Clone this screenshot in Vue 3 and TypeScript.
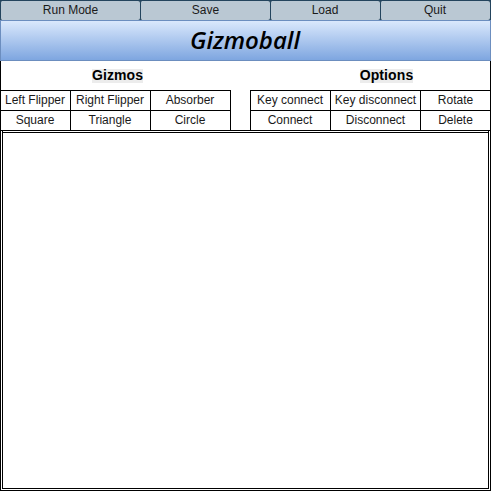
<script setup lang="ts">
interface MenuItem {
  label: string
  size: string
}

const menu: MenuItem[] = [
  { label: 'Run Mode', size: 'w140' },
  { label: 'Save', size: 'w130' },
  { label: 'Load', size: 'w110' },
  { label: 'Quit', size: 'w110' },
]

const gizmos: string[] = ['Left Flipper', 'Right Flipper', 'Absorber', 'Square', 'Triangle', 'Circle']
const options: string[] = ['Key connect', 'Key disconnect', 'Rotate', 'Connect', 'Disconnect', 'Delete']
</script>

<template>
  <div class="window">
    <nav class="menu">
      <button v-for="item in menu" :key="item.label" class="menu-item" :class="item.size">{{ item.label }}</button>
    </nav>
    <header class="banner"><h1>Gizmoball</h1></header>
    <div class="tools">
      <section class="group gizmos">
        <h2><span>Gizmos</span></h2>
        <div class="cells">
          <button v-for="name in gizmos" :key="name">{{ name }}</button>
        </div>
      </section>
      <section class="group options">
        <h2><span>Options</span></h2>
        <div class="cells">
          <button v-for="name in options" :key="name">{{ name }}</button>
        </div>
      </section>
    </div>
    <main class="board"></main>
  </div>
</template>

<style>
body {
  background: #fff;
}
</style>

<style scoped>
.window {
  display: flex;
  flex-direction: column;
  box-sizing: border-box;
  width: 491px;
  height: 491px;
  background: #fff;
  color: #000;
  font-family: "Liberation Sans", Arial, sans-serif;
  font-size: 12px;
}
button {
  box-sizing: border-box;
  margin: 0;
  padding: 0;
  border: 0;
  background: none;
  color: inherit;
  font: inherit;
  white-space: nowrap;
}
.menu {
  display: flex;
  box-sizing: border-box;
  height: 20px;
  border-top: 1px solid #23445d;
  border-right: 1px solid #23445d;
  background: #23445d;
}
.menu-item {
  height: 19px;
  line-height: 18px;
  padding: 0 0 1px;
  border-left: 1px solid #23445d;
  border-radius: 2px;
  background: #bac8d3;
  color: #1a1a1a;
}
.w140 { width: 140px; }
.w130 { width: 130px; }
.w110 {
  width: 110px;
  padding-right: 1px;
}
.banner {
  display: flex;
  align-items: center;
  justify-content: center;
  box-sizing: border-box;
  height: 41px;
  border: 1px solid #6c8ebf;
  background: linear-gradient(#dae8fc, #7ea6e0);
}
h1 {
  margin: 0;
  font: italic 600 24px/36px "Comic Sans MS", "Open Sans", sans-serif;
  padding: 0 1px 1px 0;
}
.tools {
  display: flex;
  justify-content: space-between;
  box-sizing: border-box;
  height: 70px;
  border-left: 1px solid #000;
  border-right: 1px solid #000;
  border-bottom: 1px solid #000;
}
.group {
  display: flex;
  flex-direction: column;
}
.gizmos { width: 230px; }
.options { width: 240px; }
h2 {
  height: 29px;
  margin: 0;
  font-size: 14px;
  line-height: 28px;
  text-align: center;
}
.gizmos h2 { padding-left: 3px; }
.options h2 { padding-left: 33px; }
h2 span {
  display: inline-block;
  height: 14px;
  line-height: 13px;
  letter-spacing: 0.1px;
  background: #ececec;
}
.cells {
  display: grid;
  grid-template-rows: 20px 20px;
}
.gizmos .cells { grid-template-columns: 70px 80px 80px; }
.options .cells { grid-template-columns: 81px 90px 69px; }
.cells button {
  padding: 0 1px 1px 0;
  border-top: 1px solid #000;
  border-right: 1px solid #000;
  line-height: 18px;
  color: #1a1a1a;
}
.options .cells button { padding-right: 0; }
.options .cells button:nth-child(3n + 1) {
  padding-right: 1px;
  border-left: 1px solid #000;
}
.options .cells button:nth-child(3n) { border-right: 0; }
.board {
  flex: 1;
  box-sizing: border-box;
  border: 3px double #000;
  border-top: 0;
}
.board::before {
  content: "";
  display: block;
  height: 1px;
  margin-top: 1px;
  background: #000;
}
</style>
